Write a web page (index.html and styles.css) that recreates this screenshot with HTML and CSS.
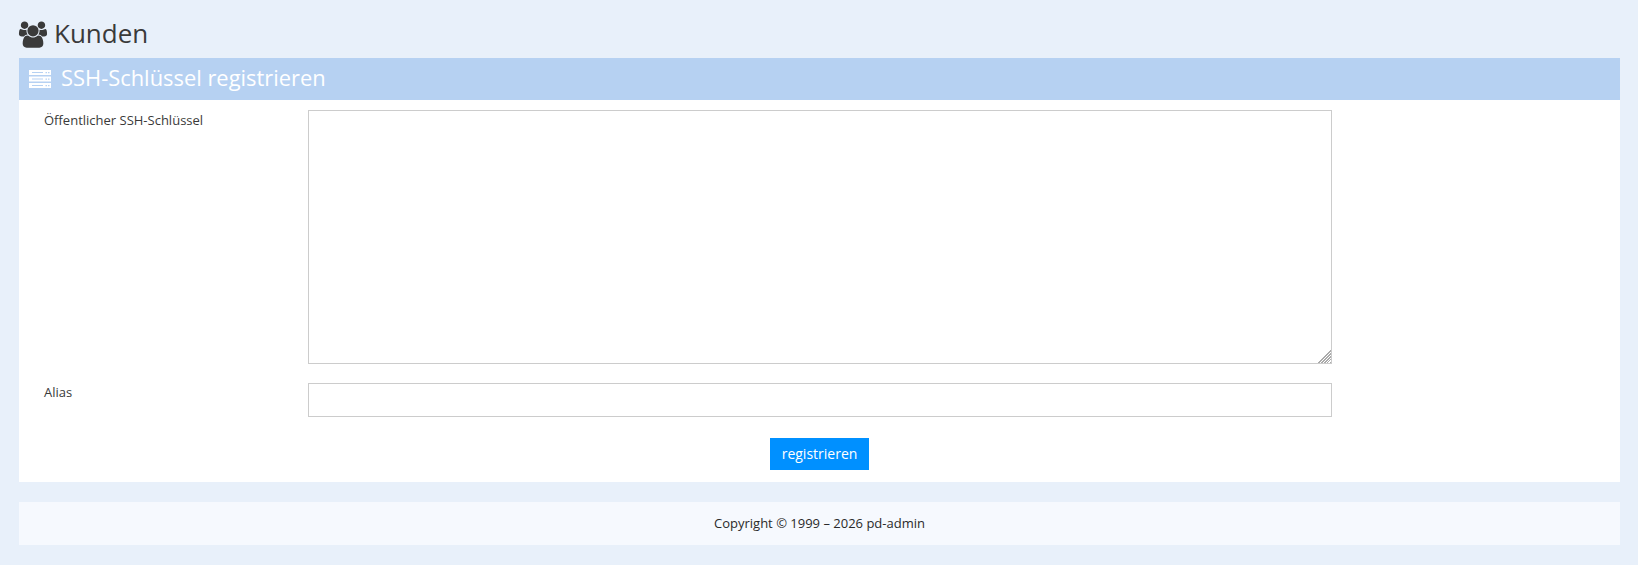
FILE: index.html
```html
<!DOCTYPE html>
<html lang="de">
<head>
<meta charset="utf-8">
<title>Kunden</title>
<link rel="stylesheet" href="styles.css">
</head>
<body>
<div class="page">
  <h1 class="page-title">
    <svg class="icon-users" viewBox="0 0 2048 1792" aria-hidden="true"><path d="M657 896q-162 5-265 128h-134q-82 0-138-40.500t-56-118.500q0-353 124-353 6 0 43.500 21t97.500 42.500 119 21.500q67 0 133-23-5 37-5 66 0 139 81 256zm1071 637q0 120-73 189.500t-194 69.500h-874q-121 0-194-69.500t-73-189.500q0-53 3.500-103.500t14-109 26.500-108.500 43-97.500 62-81 85.500-53.500 111.500-20q10 0 43 21.500t73 48 107 48 135 21.500 135-21.500 107-48 73-48 43-21.500q61 0 111.500 20t85.500 53.500 62 81 43 97.500 26.500 108.500 14 109 3.500 103.500zm-1024-1277q0 106-75 181t-181 75-181-75-75-181 75-181 181-75 181 75 75 181zm704 384q0 159-112.500 271.500t-271.500 112.500-271.500-112.500-112.500-271.500 112.500-271.500 271.500-112.500 271.500 112.500 112.500 271.500zm576 225q0 78-56 118.500t-138 40.500h-134q-103-123-265-128 81-117 81-256 0-29-5-66 66 23 133 23 59 0 119-21.500t97.500-42.500 43.500-21q124 0 124 353zm-128-609q0 106-75 181t-181 75-181-75-75-181 75-181 181-75 181 75 75 181z"/></svg>
    <span>Kunden</span>
  </h1>
  <section class="panel">
    <h2 class="panel-head">
      <svg class="icon-server" viewBox="0 0 22 18" aria-hidden="true"><path fill-rule="evenodd" d="M0 0h22v5H0zM3 2h11v1H3zM16.500 2h1.500v1.200h-1.500zM19 2h1.500v1.200H19zM0 6.500h22v5H0zM3 8.500h11v1H3zM16.500 8.500h1.500v1.200h-1.500zM19 8.500h1.500v1.200H19zM0 13h22v5H0zM3 15h11v1H3zM16.500 15h1.500v1.200h-1.500zM19 15h1.500v1.200H19z"/></svg>
      <span class="panel-title">SSH-Schlüssel registrieren</span>
    </h2>
    <form class="form">
      <div class="row">
        <label class="label" for="key">Öffentlicher SSH-Schlüssel</label>
        <textarea class="field area" id="key"></textarea>
      </div>
      <div class="row">
        <label class="label" for="alias">Alias</label>
        <input class="field text" id="alias" type="text">
      </div>
      <div class="actions">
        <button class="btn" type="button">registrieren</button>
      </div>
    </form>
  </section>
  <footer class="footer">Copyright © 1999 – 2026 pd-admin</footer>
</div>
</body>
</html>
```
FILE: styles.css
```css
* { box-sizing: border-box; }
html, body { margin: 0; padding: 0; background: #fff; }
body { font-family: "Open Sans", sans-serif; color: #3a3a3a; font-size: 13px; }
.page { background: #e8f0fa; padding: 18px 18px 20px 19px; height: 565px; }
.page-title { display: flex; align-items: flex-start; gap: 6px; margin: 0; height: 40px; font-size: 26px; font-weight: 400; line-height: 32px; color: #3a3a3a; }
.page-title span { margin-top: -1px; }
.icon-users { width: 30px; height: 27px; fill: #3a3a3a; flex: none; margin: 3px 0 0 -1px; }
.panel { background: #fff; }
.panel-head { display: flex; align-items: center; gap: 10px; margin: 0; height: 42px; padding: 0 10px; background: #b6d1f2; color: #fff; font-size: 21.9px; font-weight: 400; }
.panel-title { margin-top: -4px; }
.icon-server { width: 22px; height: 18px; fill: #fff; flex: none; }
.form { padding: 10px 0 12px; }
.row { display: flex; align-items: flex-start; margin-bottom: 19px; }
.label { width: 289px; padding: 0 0 0 25px; flex: none; line-height: 18px; color: #3a3a3a; }
.row:first-child .label { padding-top: 1px; }
.field { display: block; width: 1024px; border: 1px solid #ccc; background: #fff; margin: 0; padding: 4px; font: inherit; border-radius: 0; outline: none; }
.area { height: 254px; }
.area::-webkit-resizer { background: linear-gradient(135deg, #fff 55%, transparent 55%), repeating-linear-gradient(135deg, #aaa 0 1px, #fff 1px 2px); }
.text { height: 34px; }
.actions { display: flex; justify-content: center; margin-top: 21px; width: 1601px; }
.btn { width: 99px; height: 32px; border: 0; background: #0090ff; color: #fff; font: inherit; font-size: 14px; line-height: 30px; padding: 0 0 1px; }
.footer { margin-top: 20px; height: 43px; background: #f6f9fe; text-align: center; line-height: 43px; color: #2a2a2a; }
```
